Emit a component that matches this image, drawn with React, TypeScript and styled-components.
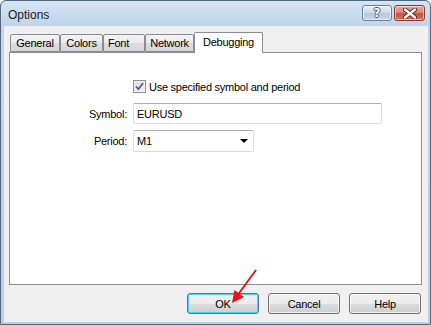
import React from 'react';
import styled, { createGlobalStyle } from 'styled-components';

const Global = createGlobalStyle`
  html, body { margin: 0; padding: 0; background: #ffffff; }
  body { font-family: "Liberation Sans", Arial, sans-serif; }
  * { box-sizing: border-box; }
`;

const Window = styled.div`
  position: relative;
  width: 431px;
  height: 325px;
  border: 1px solid #54677d;
  border-radius: 6px 6px 0 0;
  background: linear-gradient(180deg, #d6e4f4 0px, #bfd5ec 24px, #b9d1ea 100%);
  display: flex;
  flex-direction: column;
  overflow: hidden;
`;

const TitleBar = styled.div`
  height: 25px;
  flex: none;
  display: flex;
  align-items: flex-start;
  padding: 4px 5px 0 7px;
`;

const Title = styled.div`
  font-size: 12px;
  color: #1b1b1b;
  line-height: 14px;
  padding-top: 3px;
`;

const Caption = styled.div`
  margin-left: auto;
  display: flex;
  gap: 2px;
`;

const CapButton = styled.div<{ $close?: boolean }>`
  width: ${p => (p.$close ? 31 : 30)}px;
  height: 16px;
  border-radius: 3px;
  border: 1px solid ${p => (p.$close ? '#8a3a32' : '#6c7f96')};
  background: ${p =>
    p.$close
      ? 'linear-gradient(180deg, #e9a99c 0%, #d98877 45%, #c4523f 55%, #d2765f 100%)'
      : 'linear-gradient(180deg, #e6eef7 0%, #cfdceb 45%, #b7c8dc 55%, #c8d7e8 100%)'};
  box-shadow: inset 0 0 0 1px rgba(255, 255, 255, 0.55);
  display: flex;
  align-items: center;
  justify-content: center;
`;

const QGlyph = styled.span`
  font-family: "DejaVu Sans", sans-serif;
  font-weight: bold;
  font-size: 12px;
  line-height: 12px;
  color: #ffffff;
  text-shadow: 1px 0 0 #4c5d72, -1px 0 0 #4c5d72, 0 1px 0 #4c5d72, 0 -1px 0 #4c5d72;
`;

const Client = styled.div`
  flex: 1;
  margin: 0 2px 2px 3px;
  background: #f0f0f0;
  padding: 6px 6px 8px 5px;
  display: flex;
  flex-direction: column;
`;

const TabRow = styled.div`
  height: 20px;
  display: flex;
  align-items: flex-end;
  padding-left: 1px;
  position: relative;
  z-index: 1;
`;

const Tab = styled.div<{ $w: number; $active?: boolean; $left?: number }>`
  width: ${p => p.$w}px;
  height: ${p => (p.$active ? 21 : 18)}px;
  margin-bottom: ${p => (p.$active ? -1 : 0)}px;
  border: 1px solid #898c95;
  border-bottom: ${p => (p.$active ? 'none' : '1px solid #898c95')};
  border-radius: 2px 2px 0 0;
  background: ${p =>
    p.$active ? '#ffffff' : 'linear-gradient(180deg, #f3f3f3 0%, #ebebeb 50%, #dddddd 51%, #d5d5d5 100%)'};
  font-size: 11px;
  letter-spacing: -0.25px;
  color: #000;
  display: flex;
  align-items: center;
  justify-content: ${p => (p.$left !== undefined ? 'flex-start' : 'center')};
  padding-left: ${p => p.$left ?? 0}px;
  padding-bottom: ${p => (p.$active ? 3 : 0)}px;
`;

const Panel = styled.div`
  height: 233px;
  background: #ffffff;
  border: 1px solid #898c95;
  padding: 27px 0 0 0;
  display: flex;
  flex-direction: column;
`;

const CheckRow = styled.div`
  display: flex;
  align-items: center;
  gap: 3px;
  margin-left: 123px;
  height: 13px;
  font-size: 11px;
  letter-spacing: -0.25px;
`;

const CheckBox = styled.div`
  width: 13px;
  height: 13px;
  border: 1px solid #8f8f8f;
  background: linear-gradient(135deg, #dcdcdc 0%, #f4f4f4 100%);
  box-shadow: inset 0 0 0 1px #f4f4f4;
  display: flex;
  align-items: center;
  justify-content: center;
`;

const FieldRow = styled.div<{ $mt: number }>`
  display: flex;
  align-items: center;
  gap: 6px;
  margin-top: ${p => p.$mt}px;
`;

const Label = styled.div`
  width: 117px;
  text-align: right;
  font-size: 11px;
  letter-spacing: -0.25px;
  color: #000;
`;

const TextBox = styled.div<{ $w: number; $h: number }>`
  width: ${p => p.$w}px;
  height: ${p => p.$h}px;
  border: 1px solid #dadde3;
  border-top-color: #abadb3;
  border-radius: 2px;
  background: #fff;
  font-size: 11px;
  letter-spacing: -0.25px;
  display: flex;
  align-items: center;
  padding-left: 3px;
  padding-right: 5px;
`;

const Arrow = styled.div`
  margin-left: auto;
  width: 0;
  height: 0;
  border-left: 4px solid transparent;
  border-right: 4px solid transparent;
  border-top: 4px solid #000;
`;

const ButtonRow = styled.div`
  display: flex;
  justify-content: flex-end;
  gap: 9px;
  margin-top: 8px;
  padding-right: 1px;
`;

const Button = styled.div<{ $default?: boolean }>`
  width: 72px;
  height: 21px;
  border: 1px solid ${p => (p.$default ? '#3c7fb1' : '#707070')};
  border-radius: 3px;
  background: linear-gradient(180deg, #f2f2f2 0%, #ebebeb 50%, #dddddd 51%, #cfcfcf 100%);
  box-shadow: inset 0 0 0 1px ${p => (p.$default ? '#48d2f4' : 'rgba(255,255,255,0.7)')};
  font-size: 11px;
  letter-spacing: -0.25px;
  display: flex;
  align-items: center;
  justify-content: center;
  color: #000;
`;

const Overlay = styled.svg`
  position: absolute;
  left: -1px;
  top: -1px;
  pointer-events: none;
`;

export default function App() {
  return (
    <>
      <Global />
      <Window>
        <TitleBar>
          <Title>Options</Title>
          <Caption>
            <CapButton>
              <QGlyph>?</QGlyph>
            </CapButton>
            <CapButton $close>
              <svg width="14" height="11" viewBox="0 0 14 11">
                <path d="M2 1.5 L12 9.5 M12 1.5 L2 9.5" stroke="#5b1f18" strokeWidth="4.2" strokeLinecap="round" />
                <path d="M2 1.5 L12 9.5 M12 1.5 L2 9.5" stroke="#ffffff" strokeWidth="2.4" strokeLinecap="round" />
              </svg>
            </CapButton>
          </Caption>
        </TitleBar>
        <Client>
          <TabRow>
            <Tab $w={50}>General</Tab>
            <Tab $w={43}>Colors</Tab>
            <Tab $w={42} $left={4}>Font</Tab>
            <Tab $w={49}>Network</Tab>
            <Tab $w={69} $active>Debugging</Tab>
          </TabRow>
          <Panel>
            <CheckRow>
              <CheckBox>
                <svg width="9" height="9" viewBox="0 0 9 9">
                  <path d="M1 4.5 L3.5 7.2 L8 1" fill="none" stroke="#4a5f8c" strokeWidth="1.8" />
                </svg>
              </CheckBox>
              <span>Use specified symbol and period</span>
            </CheckRow>
            <FieldRow $mt={10}>
              <Label>Symbol:</Label>
              <TextBox $w={249} $h={21}>EURUSD</TextBox>
            </FieldRow>
            <FieldRow $mt={6}>
              <Label>Period:</Label>
              <TextBox $w={121} $h={22}>
                M1
                <Arrow />
              </TextBox>
            </FieldRow>
          </Panel>
          <ButtonRow>
            <Button $default>OK</Button>
            <Button>Cancel</Button>
            <Button>Help</Button>
          </ButtonRow>
        </Client>
        <Overlay width="431" height="325" viewBox="0 0 431 325">
          <line x1="256" y1="270" x2="237" y2="296" stroke="#e8141a" strokeWidth="2" />
          <polygon points="232,303 234.5,290 244,297" fill="#e8141a" />
        </Overlay>
      </Window>
    </>
  );
}
